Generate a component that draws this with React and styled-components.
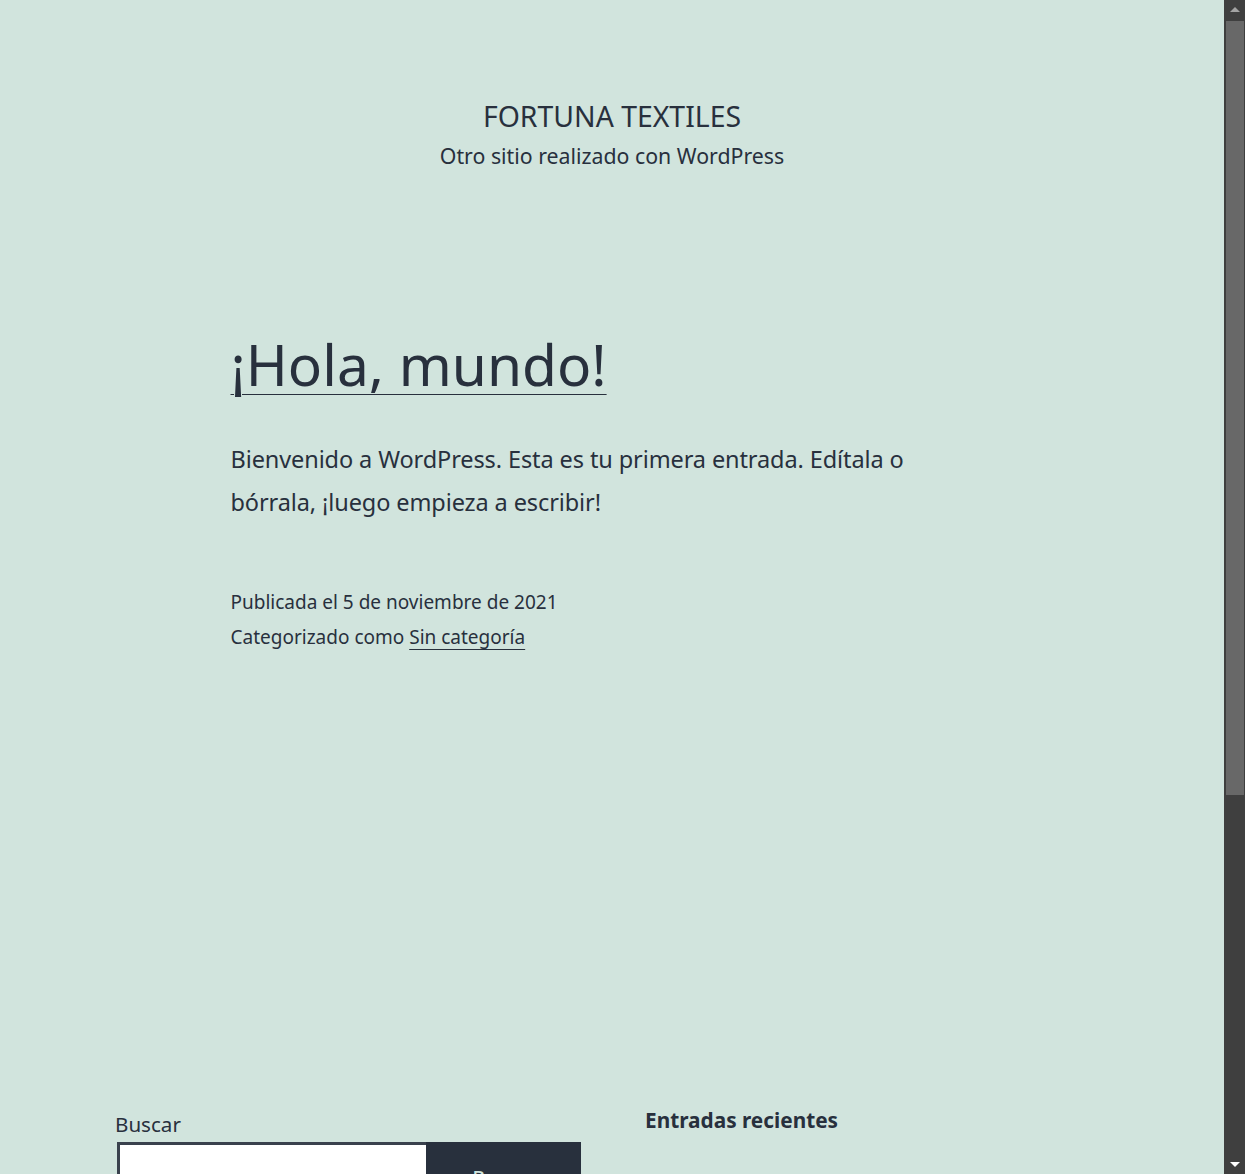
import styled, { createGlobalStyle } from "styled-components";

const Global = createGlobalStyle`
  html, body {
    margin: 0;
    padding: 0;
    overflow: hidden;
    background: #d1e4dd;
  }
  body {
    color: #28303d;
    font-family: "Noto Sans", "Open Sans", sans-serif;
  }
`;

const Frame = styled.div`
  display: flex;
  height: 100vh;
  overflow: hidden;
`;

const Page = styled.div`
  flex: 1;
  min-width: 0;
  overflow: hidden;
`;

/* fake browser scrollbar */
const ScrollBar = styled.div`
  width: 21px;
  flex-shrink: 0;
  display: flex;
  flex-direction: column;
  background: #3f3f3f;
`;

const Arrow = styled.div`
  height: 20px;
  display: flex;
  align-items: center;
  justify-content: center;
  &::before {
    content: "";
    border-left: 5px solid transparent;
    border-right: 5px solid transparent;
    ${(p) =>
      p.down
        ? `border-top: 5px solid #ffffff; margin-top: 0;`
        : `border-bottom: 5px solid #a3a3a3; margin-bottom: 2px;`}
  }
`;

const Track = styled.div`
  flex: 1;
  padding: 1px 1px 0 2px;
`;

const Thumb = styled.div`
  height: 774px;
  background: #686868;
`;

const Header = styled.header`
  padding-top: 96px;
  text-align: center;
`;

const SiteTitle = styled.p`
  margin: 0;
  font-size: 28.4px;
  line-height: 40px;
  text-transform: uppercase;
`;

const Tagline = styled.p`
  margin: 0;
  font-size: 21.3px;
  line-height: 40px;
`;

const Main = styled.main`
  max-width: 763px;
  margin: 0 auto;
  padding-top: 150px;
`;

const Title = styled.h1`
  margin: 0;
  font-size: 56.8px;
  font-weight: 400;
  line-height: 76px;
  a {
    color: inherit;
    text-decoration: underline;
    text-decoration-thickness: 1px;
    text-underline-offset: 8px;
  }
`;

const Body = styled.p`
  margin: 36px 0 0;
  font-size: 23.5px;
  letter-spacing: -0.1px;
  line-height: 43px;
`;

const Meta = styled.footer`
  margin-top: 61px;
  font-size: 19px;
  line-height: 35px;
  a {
    color: inherit;
    text-decoration-thickness: 1px;
    text-underline-offset: 5px;
  }
`;

const Widgets = styled.aside`
  display: grid;
  grid-template-columns: 1fr 1fr;
  column-gap: 64px;
  max-width: 994px;
  margin: 453px auto 0;
  padding-bottom: 180px;
`;

const Widget = styled.section`
  display: flex;
  flex-direction: column;
  gap: ${(p) => p.gap || 0}px;
`;

const Label = styled.label`
  font-size: 20.6px;
  line-height: 32px;
`;

const WidgetTitle = styled.h2`
  margin: 0;
  font-size: 20.8px;
  line-height: 24px;
  font-weight: 700;
`;

const SearchRow = styled.div`
  display: flex;
  width: 464px;
  height: 72px;
  margin: 2px 0 0 2px;
`;

const Input = styled.input`
  flex: 1;
  min-width: 0;
  border: 3px solid #39414d;
  border-right: none;
  background: #fff;
  font: inherit;
`;

const Button = styled.button`
  width: 155px;
  border: 3px solid #28303d;
  background: #28303d;
  color: #d1e4dd;
  font: inherit;
  font-size: 19px;
  font-weight: 500;
`;

const List = styled.ul`
  margin: 0;
  padding: 0;
  list-style: none;
  font-size: 19px;
  line-height: 35px;
  a {
    color: inherit;
  }
`;

const Footer = styled.footer`
  max-width: 975px;
  margin: 0 auto;
  padding: 30px 0 60px;
  border-top: 3px solid #28303d;
  display: flex;
  justify-content: space-between;
  font-size: 19px;
`;

export default function App() {
  return (
    <Frame>
      <Global />
      <Page>
        <Header>
          <SiteTitle>Fortuna Textiles</SiteTitle>
          <Tagline>Otro sitio realizado con WordPress</Tagline>
        </Header>
        <Main>
          <Title>
            <a href="#">¡Hola, mundo!</a>
          </Title>
          <Body>
            Bienvenido a WordPress. Esta es tu primera entrada. Edítala o
            bórrala, ¡luego empieza a escribir!
          </Body>
          <Meta>
            <div>Publicada el 5 de noviembre de 2021</div>
            <div>
              Categorizado como <a href="#">Sin categoría</a>
            </div>
          </Meta>
        </Main>
        <Widgets>
          <Widget>
            <Label htmlFor="s">Buscar</Label>
            <SearchRow>
              <Input id="s" type="search" />
              <Button type="button">Buscar</Button>
            </SearchRow>
          </Widget>
          <Widget gap={60}>
            <WidgetTitle>Entradas recientes</WidgetTitle>
            <List>
              <li>
                <a href="#">¡Hola, mundo!</a>
              </li>
            </List>
          </Widget>
        </Widgets>
        <Footer>
          <span>Fortuna Textiles</span>
          <span>Funciona gracias a WordPress.</span>
        </Footer>
      </Page>
      <ScrollBar>
        <Arrow />
        <Track>
          <Thumb />
        </Track>
        <Arrow down />
      </ScrollBar>
    </Frame>
  );
}
